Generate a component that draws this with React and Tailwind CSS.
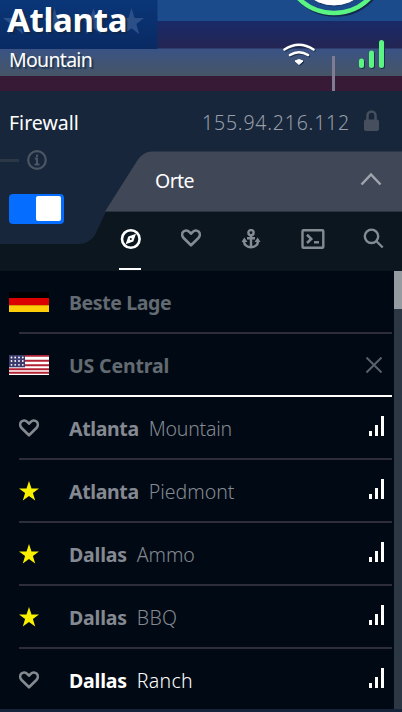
import { useState } from "react"

const places = [
    { city: 'Atlanta', name: 'Mountain', fav: false, spacing: 'tracking-[-0.35px]', nameSpacing: 'tracking-[-0.25px]' },
    { city: 'Atlanta', name: 'Piedmont', fav: true, spacing: 'tracking-[-0.35px]', nameSpacing: 'tracking-[0px]' },
    { city: 'Dallas', name: 'Ammo', fav: true, spacing: 'tracking-[-0.2px]', nameSpacing: 'tracking-[-0.1px]' },
    { city: 'Dallas', name: 'BBQ', fav: true, spacing: 'tracking-[-0.2px]', nameSpacing: 'tracking-[0.2px]' },
    { city: 'Dallas', name: 'Ranch', fav: false, active: true, spacing: 'tracking-[-0.2px]', nameSpacing: 'tracking-[0.3px]' },
]

const STAR = "M10 0l2.5 7.4H20l-6.1 4.5 2.3 7.6L10 15l-6.2 4.5 2.3-7.6L0 7.4h7.5z"

const Heart = () => (
    <svg width="22" height="20" viewBox="0 0 22 20" fill="none" stroke="currentColor" strokeWidth="2.6" strokeLinejoin="round">
        <path d="M11 17.3L3.6 10C1.9 8.2 1.7 5.4 3.3 3.7c1.7-1.8 4.3-1.6 5.9.1L11 5.7l1.8-1.9c1.6-1.7 4.2-1.9 5.9-.1 1.6 1.7 1.4 4.5-.3 6.3z" />
    </svg>
)

const Compass = () => (
    <svg width="22" height="22" viewBox="0 0 22 22">
        <circle cx="11.8" cy="11" r="8.8" fill="none" stroke="currentColor" strokeWidth="2.6" />
        <path d="M17 5.8l-2.7 7.7-7.7 2.7 2.7-7.7z" fill="currentColor" />
        <circle cx="11.8" cy="11" r="1" fill="#0b161f" />
    </svg>
)

const Anchor = () => (
    <svg width="20" height="20" viewBox="0 0 20 20" fill="none" stroke="currentColor" strokeWidth="2.4">
        <circle cx="10" cy="3.7" r="2.6" />
        <path d="M10 6.3V18M6 9.3h8M2.9 12.5c.4 3.4 3.2 5.8 7.1 5.8s6.7-2.4 7.1-5.8" />
        <path d="M3.3 8.5l3.2 4.5h-6zM16.700 8.500l2.800 4.500h-6z" fill="currentColor" stroke="none" />
    </svg>
)

const Terminal = () => (
    <svg width="24" height="20" viewBox="0 0 24 20" fill="none" stroke="currentColor" strokeWidth="2.4">
        <rect x="1.5" y="1.2" width="20.8" height="17.6" rx="1" />
        <path d="M6 5.8l4.2 4.1L6 14" strokeWidth="2.6" />
        <path d="M13 13.3h5" />
    </svg>
)

const Search = () => (
    <svg width="22" height="22" viewBox="0 0 22 22" fill="none" stroke="currentColor" strokeWidth="2.4">
        <circle cx="9.5" cy="8.3" r="6.7" />
        <path d="M14.2 13l6.500 6.500" />
    </svg>
)

const Signal = () => (
    <svg width="16" height="20" viewBox="0 0 16 20" fill="#fff">
        <path d="M0 15h3v5H0zM6 9h3v11H6zM12 0h3v20h-3z" />
    </svg>
)

const GermanFlag = () => (
    <svg width="40" height="20" viewBox="0 0 40 20">
        <path d="M0 0h40v6H0z" fill="#000" />
        <path d="M0 6h40v7.5H0z" fill="#dd0000" />
        <path d="M0 13.3h40V20H0z" fill="#ffce08" />
    </svg>
)

const UsFlag = () => (
    <svg width="40" height="20" viewBox="0 0 40 20">
        <path d="M0 0h40v20H0z" fill="#fff" />
        <path d="M0 1h40M0 6h40M0 10.5h40M0 14.5h40M0 18h40" transform="translate(0 -.2)" stroke="#b22234" strokeWidth="1.9" />
        <path d="M0 0h16v12.3H0z" fill="#3c3b6e" />
        {[2.5, 6, 9.8].map(y => [2.5, 6.2, 10, 13.8].map(x => (
            <circle key={`${x}-${y}`} cx={x} cy={y} r=".9" fill="#fff" />
        )))}
    </svg>
)

const Header = () => (
    <header className="relative h-[91px]">
        <svg className="absolute inset-0" width="402" height="91" viewBox="0 0 402 91">
            <defs>
                <linearGradient id="navy" x1="0" y1="0" x2="0" y2="1">
                    <stop offset="0" stopColor="#192a68" />
                    <stop offset="1" stopColor="#242552" />
                </linearGradient>
                <linearGradient id="steel" x1="0" y1="0" x2="0" y2="1">
                    <stop offset="0" stopColor="#3a5385" />
                    <stop offset="1" stopColor="#465566" />
                </linearGradient>
                <linearGradient id="canton" x1="0" y1="0" x2="0" y2="1">
                    <stop offset="0" stopColor="#0a3678" />
                    <stop offset="1" stopColor="#092a63" />
                </linearGradient>
            </defs>
            <path d="M0 0h402v21H0z" fill="#1b4b8b" />
            <path d="M0 21h402v28H0z" fill="url(#navy)" />
            <path d="M0 48.5h402V76H0z" fill="url(#steel)" />
            <path d="M0 76h402v15H0z" fill="#371a35" />
            <path d="M0 0h157.5v49H0z" fill="url(#canton)" />
            {[3, 42, 81, 119].map(x => (
                <path key={x} d={STAR} transform={`translate(${x} 8) scale(1.25 1.35)`} fill="#2b4f86" />
            ))}
            <g fill="none">
                <circle cx="335.5" cy="-35.5" r="50" stroke="#13294d" strokeWidth="4.5" />
                <circle cx="334" cy="-37" r="50" stroke="#5bf582" strokeWidth="4.5" />
                <circle cx="334" cy="-34" r="40" fill="#fff" stroke="#12366c" strokeWidth="1" />
            </g>
            <path d="M333.5 56v35" stroke="#807c93" strokeWidth="3" />
            <g className="drop-shadow-[1.5px_1.5px_0_#1d304b]">
                <path d="M284.5 49.5q14.5-9.5 29 0M290 55q9-5.5 18 0" fill="none" stroke="#fff" strokeWidth="2.6" strokeLinecap="round" />
                <path d="M295 61q4-3 8 0l-4 3.5z" fill="#fff" stroke="#fff" />
                <path d="M361.5 61v4.5M371.5 53v12.5M381.5 42.5v23" stroke="#5bf582" strokeWidth="5" strokeLinecap="round" />
            </g>
        </svg>
        <div className="relative pl-[7px] text-white">
            <h1 className="h-10 text-[33px] leading-10 font-bold tracking-[-0.3px] [text-shadow:2px_2px_1px_#10294d]">Atlanta</h1>
            <p className="h-[38px] pl-[2px] leading-[39px] tracking-[-0.7px] [text-shadow:2px_2px_1px_#22364f]">Mountain</p>
        </div>
    </header>
)

const Place = ({ place }) => (
    <li className="flex h-[63px] items-end pl-[19px]">
        <div className="flex h-full w-[373px] items-center border-b-2 border-[#2d2d3c] pb-px">
            <span className="w-[50px]">
                {
                    place.fav
                        ? <svg className="mt-[2px]" width="20" height="20" viewBox="0 0 20 20" fill="#f9f000"><path d={STAR} /></svg>
                        : <span className="-ml-px block pt-[2px] text-[#858a90]"><Heart /></span>
                }
            </span>
            <span className={place.active ? 'flex gap-[10px] pt-1 text-white' : 'flex gap-[10px] pt-1 text-[#858991]'}>
                <b className={place.spacing}>{place.city}</b>
                <span className={`font-light ${place.nameSpacing}`}>{place.name}</span>
            </span>
            <span className="mr-[7px] ml-auto pb-[2px]"><Signal /></span>
        </div>
    </li>
)

export default function App() {
    const [firewall, setFirewall] = useState(true)

    return (
        <div className="h-[712px] w-[402px] overflow-hidden bg-[#15243a] font-['Noto_Sans',sans-serif] text-[19.5px] leading-7">
            <Header />

            <section className="relative h-[180px] bg-[#17263a]">
                <svg className="absolute inset-0" width="402" height="180" viewBox="0 0 402 180">
                    <path d="M402 120.5V180H0v-27h78q11 0 17-9l11-23.5z" fill="#0b161f" />
                    <path d="M105 120.5L137 70q6-9.5 15-9.5h250v60z" fill="#404858" />
                </svg>
                <div className="relative flex h-[61px] items-center pt-[3px] pr-[22px] pl-[9px]">
                    <span className="text-white">Firewall</span>
                    <span className="ml-auto font-light tracking-[0.8px] text-[#979ea8]">155.94.216.112</span>
                    <svg className="mb-1 ml-[13px]" width="17" height="22" viewBox="0 0 17 22">
                        <path d="M4.5 10V5.5a4 4 0 018 0V10" fill="none" stroke="#454f5e" strokeWidth="2.5" />
                        <rect x="1" y="9.5" width="15" height="11.5" rx="2" fill="#454f5e" />
                    </svg>
                </div>
                <div className="relative flex">
                    <div className="w-[106px]">
                        <div className="-mt-[3px] flex h-[22px] items-center gap-[7px]">
                            <span className="h-[3px] w-[19px] bg-[#2d3847]" />
                            <svg width="22" height="22" viewBox="0 0 22 22" stroke="#4b5563" strokeWidth="2.2" fill="none">
                                <circle cx="11" cy="11" r="8.8" />
                                <path d="M8.8 9.5H11V16M8.5 15.5h5M11 5.5v2.4" strokeWidth="2" />
                            </svg>
                        </div>
                        <button
                            className={firewall
                                ? 'mt-[23px] ml-[9px] flex h-[30px] w-[55px] justify-end rounded bg-[#056dff] p-[2px] pr-[3px]'
                                : 'mt-[23px] ml-[9px] flex h-[30px] w-[55px] justify-start rounded bg-[#404858] p-[2px] pr-[3px]'}
                            onClick={() => setFirewall(!firewall)}
                        >
                            <span className="h-[25px] w-[25px] rounded-[2px] bg-white" />
                        </button>
                    </div>
                    <div className="flex-1">
                        <div className="flex h-[59px] items-center justify-between pr-5 pb-px pl-[49px] text-white">
                            <span className="tracking-[-0.6px]">Orte</span>
                            <svg className="mb-[4px]" width="22" height="14" viewBox="0 0 22 14" fill="none" stroke="#a0a5ae" strokeWidth="2.5">
                                <path d="M1.5 12.5L11 2.5l9.5 10" />
                            </svg>
                        </div>
                        <nav className="flex h-[60px] justify-between pr-[18px] pl-[13px] text-[#858b92]">
                            <span className="flex h-[59px] items-center border-b-2 border-white pb-[2px] text-white"><Compass /></span>
                            <span className="flex h-[54px] items-center"><Heart /></span>
                            <span className="flex h-14 items-center"><Anchor /></span>
                            <span className="-mr-[2px] flex h-14 items-center pl-[2px]"><Terminal /></span>
                            <span className="flex h-14 items-center"><Search /></span>
                        </nav>
                    </div>
                </div>
            </section>

            <div className="flex h-[438px] overflow-hidden bg-[#010a14]">
                <ul className="w-[394px]">
                    <li className="relative flex h-[63px] items-center pb-px pl-[9px] text-[#636a72]">
                        <GermanFlag />
                        <b className="ml-5 pt-[2px] tracking-[-0.4px]">Beste Lage</b>
                        <span className="absolute bottom-0 left-[19px] h-[2px] w-[373px] bg-[#2d2d3c]" />
                    </li>
                    <li className="relative flex h-[63px] items-center pb-px pl-[9px] text-[#636a72]">
                        <UsFlag />
                        <b className="ml-5 pt-[2px] tracking-[-0.15px]">US Central</b>
                        <svg className="mr-3 ml-auto" width="16" height="16" viewBox="0 0 16 16" stroke="#5b616b" strokeWidth="2">
                            <path d="M.5 .5l15 15M15.5 .5l-15 15" />
                        </svg>
                        <span className="absolute bottom-0 left-[19px] h-[2px] w-[373px] bg-white" />
                    </li>
                    {places.map((place, i) => <Place key={i} place={place} />)}
                </ul>
                <div className="w-2 bg-[#2b3745]">
                    <div className="h-[38px] bg-[#969ba2]" />
                </div>
            </div>
        </div>
    )
}
